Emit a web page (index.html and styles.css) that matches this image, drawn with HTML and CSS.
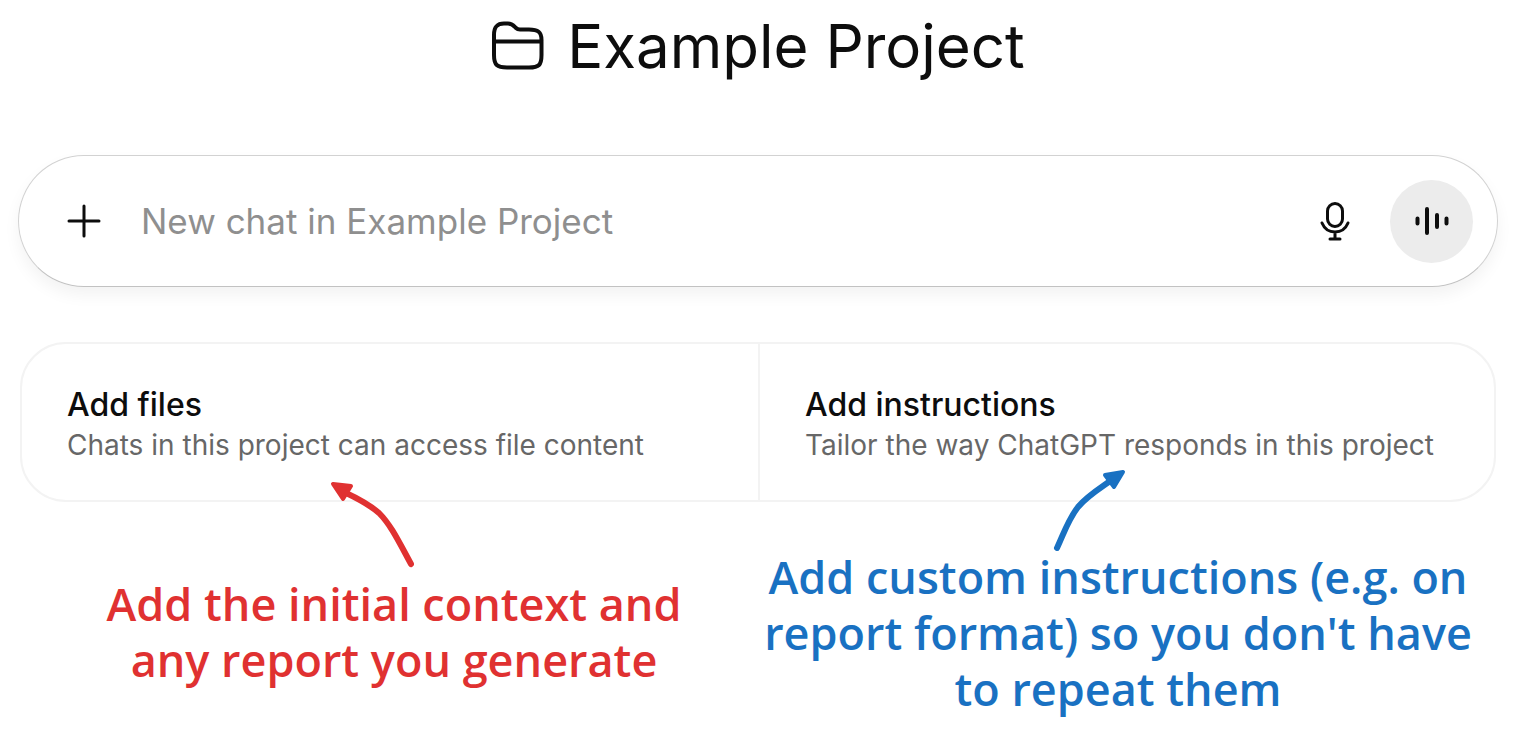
FILE: index.html
```html
<!DOCTYPE html>
<html lang="en">
<head>
  <meta charset="UTF-8">
  <meta name="viewport" content="width=device-width, initial-scale=1">
  <title>Example Project</title>
  <link rel="stylesheet" href="styles.css">
</head>
<body>
  <main class="project">
    <h1 class="title">
      <svg class="title-icon" width="54" height="50" viewBox="0 0 54 50" aria-hidden="true">
        <path d="M3 17V14C3 6 6 2.500 13 2.500H17C21 2.500 22 4 25 7C26 8 27 8.500 29 8.500H38C47 8.500 50.500 11 50.500 19V34C50.500 44 48 46.500 38 46.500H16C6 46.500 3 44 3 34V17ZM3 20.500H50.500"/>
      </svg>
      <span>Example Project</span>
    </h1>

    <form class="composer">
      <button class="icon-btn" type="button" aria-label="Add">
        <svg width="34" height="36" viewBox="0 0 34 36"><path d="M17 3V33M2 18H32"/></svg>
      </button>
      <input class="prompt" type="text" placeholder="New chat in Example Project" aria-label="New chat in Example Project">
      <button class="icon-btn" type="button" aria-label="Dictate">
        <svg width="30" height="40" viewBox="0 0 30 40"><rect x="7.500" y="2.500" width="15" height="23" rx="7.500"/><path d="M2 22C4.500 28 9 31 15 31S25.500 28 28 22M15 31V38M10 38H20"/></svg>
      </button>
      <button class="voice-btn" type="button" aria-label="Voice mode">
        <svg width="36" height="30" viewBox="0 0 36 30"><path d="M3.500 12.500V17.500M13 3V27M23 9V21M32.500 12.500V17.500"/></svg>
      </button>
    </form>

    <div class="cards">
      <button class="card" type="button">
        <span class="card-title">Add files</span>
        <span class="card-text">Chats in this project can access file content</span>
      </button>
      <button class="card" type="button">
        <span class="card-title">Add instructions</span>
        <span class="card-text">Tailor the way ChatGPT responds in this project</span>
      </button>
    </div>

    <div class="notes">
      <div class="note note-files">
        <svg class="arrow" width="84" height="88" viewBox="0 0 84 88" aria-hidden="true">
          <path class="line" d="M81 84C69 62 61 45 49 33C41 26 29 19 14 12"/>
          <path class="head" d="M3 4L21 6L13 19Z"/>
        </svg>
        <p>Add the initial context and<br>any report you generate</p>
      </div>
      <div class="note note-instructions">
        <svg class="arrow" width="74" height="84" viewBox="0 0 74 84" aria-hidden="true">
          <path class="line" d="M4 80C11 65 15 52 25 39C34 28 46 21 60 11"/>
          <path class="head" d="M70 4L52 7L61 19Z"/>
        </svg>
        <p>Add custom instructions (e.g. on<br>report format) so you don't have<br>to repeat them</p>
      </div>
    </div>
  </main>
</body>
</html>
```

FILE: styles.css
```css
* {
  box-sizing: border-box;
}
body {
  margin: 0;
  background: #fff;
  color: #0d0d0d;
  font-family: Inter, "Liberation Sans", sans-serif;
}
button,
input {
  padding: 0;
  border: 0;
  background: none;
  color: inherit;
  font: inherit;
}
button {
  cursor: pointer;
}
svg {
  display: block;
  fill: none;
  stroke: currentColor;
  stroke-width: 4px;
  stroke-linecap: round;
  stroke-linejoin: round;
}
.project {
  padding: 8px 30px 0 18px;
}
.title {
  display: flex;
  align-items: center;
  justify-content: center;
  gap: 22px;
  margin: 0 0 71px;
  font-size: 60px;
  font-weight: 400;
  line-height: 76px;
}

/* composer */
.composer {
  display: flex;
  align-items: center;
  height: 132px;
  padding: 0 24px 0 48px;
  border: 1px solid #d2d2d2;
  border-bottom-color: #c2c2c2;
  border-radius: 66px;
  box-shadow: 0 8px 16px rgba(0, 0, 0, 0.05);
}
.prompt {
  flex: 1;
  min-width: 0;
  margin: 0 40px;
  outline: none;
  font-size: 35px;
}
.prompt::placeholder {
  color: #8f8f8f;
  opacity: 1;
}
.icon-btn svg {
  stroke-width: 3px;
}
.voice-btn {
  display: grid;
  place-items: center;
  width: 83px;
  height: 83px;
  margin-left: 40px;
  border-radius: 50%;
  background: #ececec;
}

/* cards */
.cards {
  display: grid;
  grid-template-columns: 1fr 1fr;
  margin: 55px 2px 0;
  border: 2px solid #f3f3f3;
  border-radius: 46px;
}
.card {
  padding: 41px 45px 35px;
  text-align: left;
}
.card + .card {
  border-left: 2px solid #f3f3f3;
}
.card-title,
.card-text {
  display: block;
  line-height: 40px;
}
.card-title {
  font-size: 32px;
  font-weight: 500;
}
.card-text {
  color: #676767;
  font-size: 28px;
}

/* handwritten notes */
.notes {
  display: grid;
  grid-template-columns: 1fr 1fr;
  margin: 0 2px;
}
.note {
  position: relative;
  font-family: Excalifont, "Open Sans", sans-serif;
  font-size: 45px;
  font-weight: 600;
  line-height: 56px;
  text-align: center;
  white-space: nowrap;
}
.note p {
  margin: 0;
}
.note-files {
  padding: 74px 0 0 10px;
  color: #e03131;
}
.note-instructions {
  padding: 47px 18px 0 0;
  color: #1971c2;
}
.arrow {
  position: absolute;
  top: -22px;
  left: 42%;
}
.note-instructions .arrow {
  top: -34px;
  left: 40%;
}
.line {
  stroke-width: 6px;
}
.head {
  fill: currentColor;
}
```
